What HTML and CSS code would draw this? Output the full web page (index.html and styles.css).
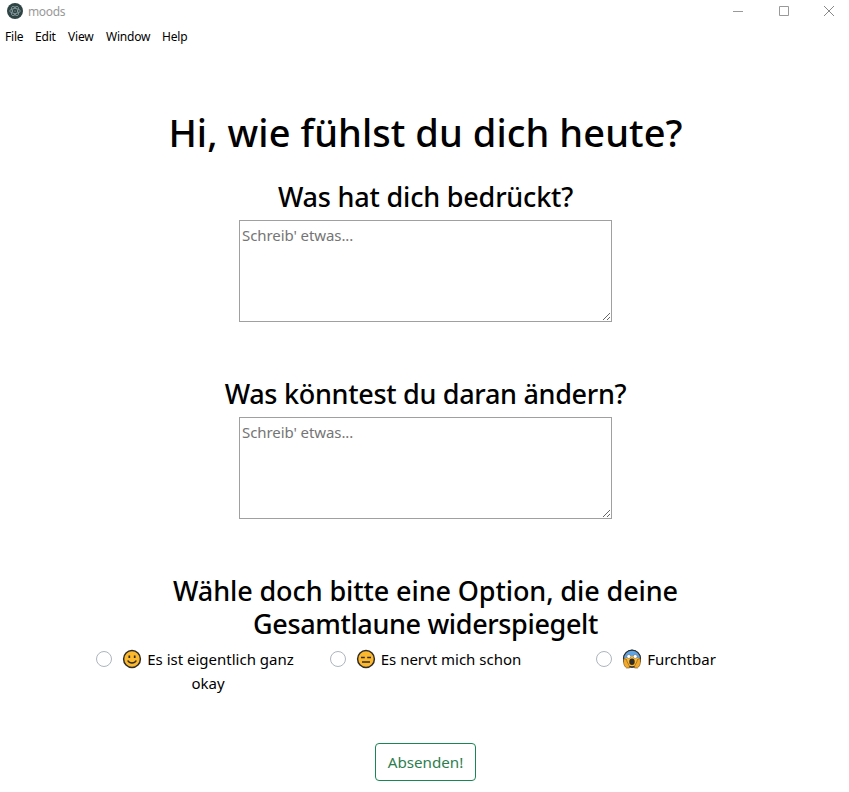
FILE: index.html
```
<!DOCTYPE html>
<html lang="de">
<head>
<meta charset="utf-8">
<title>moods</title>
<link rel="stylesheet" href="styles.css">
</head>
<body>
<header class="titlebar">
  <svg class="app-icon" width="16" height="16" viewBox="0 0 16 16" fill="none">
    <circle cx="8" cy="8" r="8" fill="#2f4444"/>
    <g stroke="#a9bdc1" stroke-width=".6">
      <ellipse cx="8" cy="8" rx="5.200" ry="2.300"/>
      <ellipse cx="8" cy="8" rx="5.200" ry="2.300" transform="rotate(60 8 8)"/>
      <ellipse cx="8" cy="8" rx="5.200" ry="2.300" transform="rotate(120 8 8)"/>
    </g>
    <circle cx="8" cy="8" r="2.200" fill="#2f4444"/>
    <circle cx="8" cy="8" r=".6" fill="#a9bdc1"/>
  </svg>
  <span class="app-name">moods</span>
  <div class="controls">
    <svg width="12" height="12" stroke="#999"><path d="M1 6.500h10"/></svg>
    <svg width="12" height="12" stroke="#999" fill="none"><path d="M1.500 1.500h9v9h-9z"/></svg>
    <svg width="12" height="12" stroke="#888"><path d="M1 1l10 10M11 1L1 11"/></svg>
  </div>
</header>
<nav class="menu"><span class="m-file">File</span><span class="m-edit">Edit</span><span class="m-view">View</span><span class="m-window">Window</span><span class="m-help">Help</span></nav>
<main>
  <h1>Hi, wie fühlst du dich heute?</h1>
  <section class="question">
    <h3 class="q-past">Was hat dich bedrückt?</h3>
    <textarea placeholder="Schreib' etwas..."></textarea>
  </section>
  <section class="question">
    <h3 class="q-change">Was könntest du daran ändern?</h3>
    <textarea placeholder="Schreib' etwas..."></textarea>
  </section>
  <h3 class="q-mood"><span class="line-one">Wähle doch bitte eine Option, die deine</span><br><span class="line-two">Gesamtlaune widerspiegelt</span></h3>
  <div class="options">
    <div class="option">
      <input type="radio" name="mood" id="okay">
      <label for="okay"><svg class="emoji" width="20" height="20" viewBox="0 0 20 20" fill="none" stroke="#302c28">
        <circle cx="10" cy="10" r="8.400" fill="#fdb92e" stroke-width="1.500"/>
        <path d="M7.300 6.500v2.500M12.700 6.500v2.500" stroke-width="1.700"/>
        <path d="M5.700 11.500c1.800 3.400 6.800 3.400 8.600 0" stroke-width="1.500"/>
      </svg><span>Es ist eigentlich ganz</span><br><span>okay</span></label>
    </div>
    <div class="option">
      <input type="radio" name="mood" id="nervt">
      <label for="nervt"><svg class="emoji" width="20" height="20" viewBox="0 0 20 20" fill="none" stroke="#302c28">
        <circle cx="10" cy="10" r="8.400" fill="#fdb92e" stroke-width="1.500"/>
        <path d="M5 8.500h3.800M11.200 8.500H15M6 13h8" stroke-width="1.300"/>
      </svg><span>Es nervt mich schon</span></label>
    </div>
    <div class="option">
      <input type="radio" name="mood" id="furchtbar">
      <label for="furchtbar"><svg class="emoji" width="20" height="20" viewBox="0 0 20 20" fill="none" stroke="#302c28">
        <circle cx="10" cy="9.700" r="8.500" fill="#fdb92e"/>
        <path d="M2 9C2.300 3.900 5.500 1.200 10 1.200S17.700 3.900 18 9c-4 1-5.500-2-8-2S6 10 2 9z" fill="#5ba5e8" stroke="none"/>
        <circle cx="10" cy="9.700" r="8.500" stroke-width="1.200"/>
        <g fill="#fff" stroke="#6b5a45" stroke-width=".5"><circle cx="6.800" cy="7.500" r="2"/><circle cx="13.200" cy="7.500" r="2"/></g>
        <path d="M2 9.500c-1 3-.6 7 2.500 9.500h3c.7-3-2.500-4.500-3-8.500zM18 9.500c1 3 .6 7-2.500 9.500h-3c-.7-3 2.500-4.500 3-8.500z" fill="#f3a929" stroke="#705027" stroke-width=".6"/>
        <ellipse cx="10" cy="12.800" rx="2.700" ry="3.200" fill="#302c28" stroke="none"/>
      </svg><span>Furchtbar</span></label>
    </div>
  </div>
  <button class="submit" type="button">Absenden!</button>
</main>
</body>
</html>
```
FILE: styles.css
```
* { box-sizing: border-box; }
body {
  margin: 0;
  background: #fff;
  color: #000;
  font: 400 16px/24px "Noto Sans", "Open Sans", sans-serif;
}
.titlebar { display: flex; align-items: center; height: 22px; padding: 0 14px 0 7px; }
.app-icon { flex: none; }
.app-name { margin: 2px 0 0 5px; color: #999; font-size: 12px; line-height: 16px; letter-spacing: -.35px; }
.controls { display: flex; gap: 33.500px; margin-left: auto; }
.controls svg { display: block; }
.menu { display: flex; height: 29px; padding: 1px 5px 0; font-size: 12px; line-height: 28px; gap: 12px; letter-spacing: -.2px; white-space: nowrap; }
.m-file { width: 18px; }
.m-edit { width: 21px; }
.m-view { width: 26px; }
.m-window { width: 44px; }
main { display: flex; flex-direction: column; align-items: center; padding: 57px 0 0 2px; }
h1, h3 { margin: 0; font-weight: 500; text-align: center; white-space: nowrap; }
h1 { font-size: 38px; line-height: 48px; margin-bottom: 24px; letter-spacing: .07px; }
h3 { font-size: 27px; line-height: 33px; }
.q-past { letter-spacing: -.2px; }
.q-change { letter-spacing: -.3px; }
.line-one { letter-spacing: -.1px; }
.line-two { letter-spacing: -.36px; }
.question { display: flex; flex-direction: column; align-items: center; height: 197px; }
textarea {
  display: block;
  width: 373px;
  height: 102px;
  margin: 7px 0 0;
  padding: 2px;
  border: 1px solid #a0a0a0;
  border-radius: 0;
  background: #fff;
  font: inherit;
  font-size: 15px;
  line-height: 24px;
  letter-spacing: -.08px;
  resize: both;
}
textarea::placeholder { color: #757575; }
.options { display: grid; grid-template-columns: repeat(3, 230.500px); margin-top: 7px; height: 96px; }
.option { display: flex; justify-content: center; align-items: flex-start; white-space: nowrap; }
.option input { appearance: none; flex: none; width: 16px; height: 16px; margin: 4px 10px 0 0; border: 1px solid #adb5bd; border-radius: 50%; }
.option label { text-align: center; font-size: 15px; }
.emoji { display: inline-block; vertical-align: -4px; margin-right: 5px; }
.submit {
  width: 101px;
  height: 38px;
  padding: 0;
  border: 1px solid #198754;
  border-radius: 4px;
  background: #fff;
  color: #2e7d50;
  font: inherit;
  font-size: 15.200px;
}
```
